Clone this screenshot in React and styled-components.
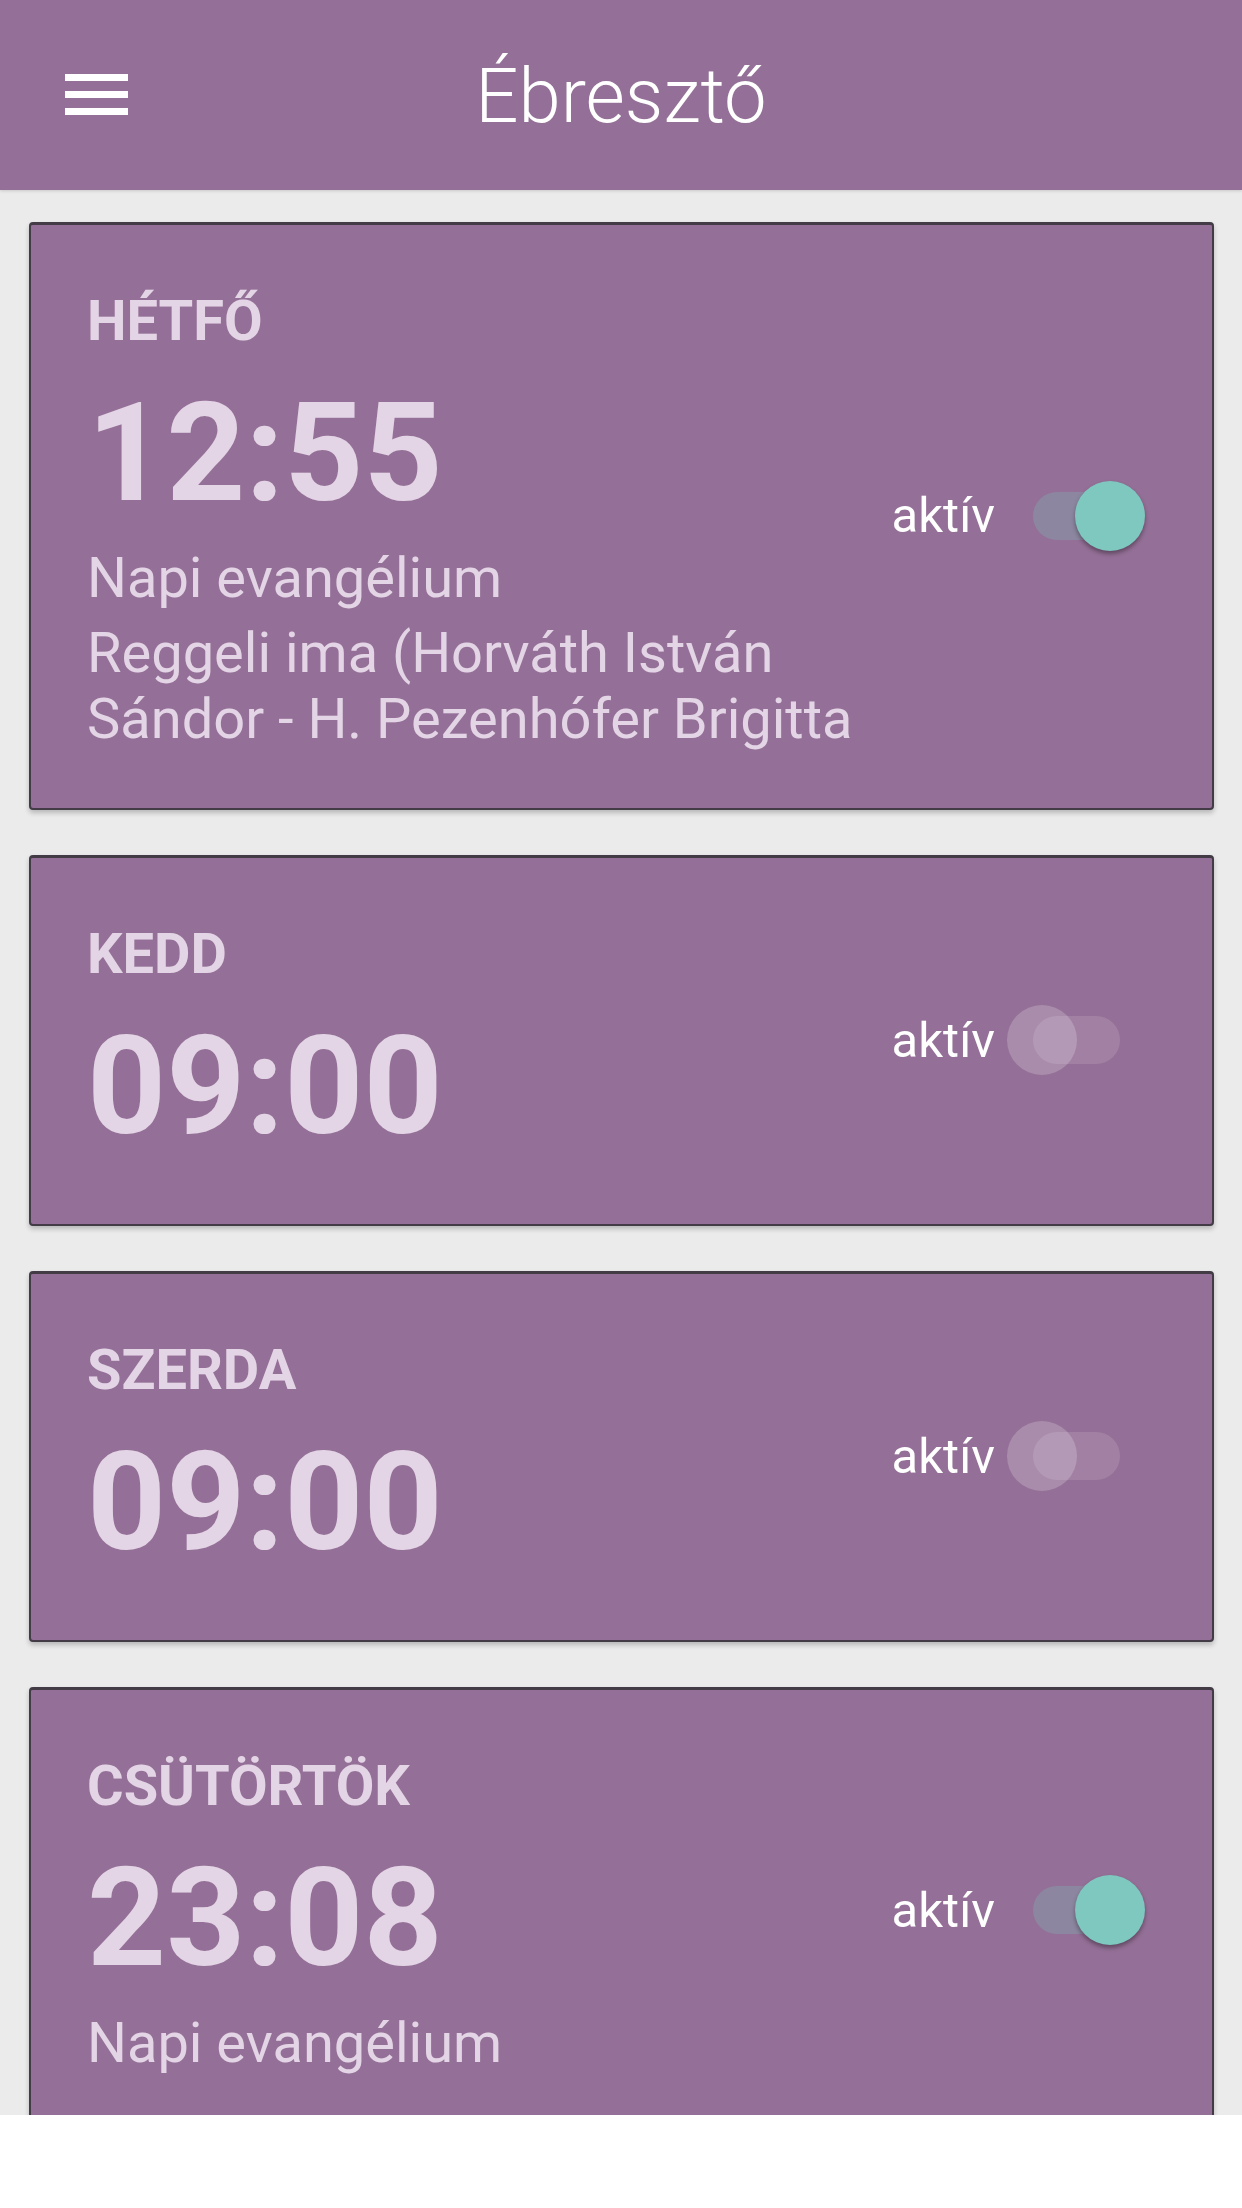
import styled, { createGlobalStyle } from "styled-components";

const GlobalStyle = createGlobalStyle`
  html, body {
    margin: 0;
    padding: 0;
    background: #ffffff;
    font-family: Roboto, "Noto Sans", "Liberation Sans", sans-serif;
  }
`;

const Screen = styled.div`
  height: 2115px;
  overflow: hidden;
  background: #ebebeb;
`;

const TopBar = styled.header`
  height: 190px;
  background: #946f97;
  display: grid;
  grid-template-columns: 1fr auto 1fr;
  align-items: center;
  box-shadow: 0 1px 3px rgba(0, 0, 0, 0.15);
`;

const MenuButton = styled.div`
  display: flex;
  flex-direction: column;
  gap: 10px;
  padding-left: 65px;
  padding-bottom: 2px;
  justify-self: start;

  span {
    display: block;
    width: 63px;
    height: 7px;
    background: #ffffff;
  }
`;

const Title = styled.h1`
  margin: 0;
  padding-top: 2px;
  font-size: 76px;
  font-weight: 300;
  color: #ffffff;
  line-height: 1;
`;

const List = styled.div`
  display: flex;
  flex-direction: column;
  gap: 45px;
  padding: 32px 28px 0 29px;
`;

const Card = styled.div`
  display: flex;
  align-items: center;
  justify-content: space-between;
  background: #946f97;
  border: 2px solid #433b46;
  border-top-width: 3px;
  border-radius: 4px;
  box-shadow: 0 3px 5px rgba(0, 0, 0, 0.22);
  padding: 62px 67px 56px 56px;
`;

const Info = styled.div`
  display: flex;
  flex-direction: column;
  color: #e4d5e6;
`;

const Day = styled.div`
  font-size: 56px;
  font-weight: 700;
  line-height: 68px;
`;

const Time = styled.div`
  margin: 24px 0 8px;
  font-size: 138px;
  font-weight: 700;
  line-height: 148px;
`;

const Program = styled.div`
  margin-top: 10px;
  font-size: 56px;
  line-height: 66px;
`;

const Details = styled.div`
  margin-top: 9px;
  font-size: 56px;
  line-height: 66px;
  max-width: 790px;
`;

const SwitchRow = styled.label`
  display: flex;
  align-items: center;
  gap: 10px;
  margin-bottom: 8px;
  color: #ffffff;
  font-size: 49px;
`;

const Switch = styled.div`
  position: relative;
  width: 140px;
  height: 70px;
`;

const Track = styled.div`
  position: absolute;
  left: 28px;
  top: 11px;
  width: 87px;
  height: 48px;
  border-radius: 24px;
  background: ${(p) => (p.$on ? "#8c86a0" : "rgba(255, 255, 255, 0.12)")};
`;

const Thumb = styled.div`
  position: absolute;
  top: 0;
  left: ${(p) => (p.$on ? "70px" : "2px")};
  width: 70px;
  height: 70px;
  border-radius: 50%;
  background: ${(p) => (p.$on ? "#7ec8bf" : "rgba(255, 255, 255, 0.2)")};
  box-shadow: ${(p) => (p.$on ? "0 3px 4px rgba(0, 0, 0, 0.35)" : "none")};
`;

const alarms = [
  {
    day: "HÉTFŐ",
    time: "12:55",
    on: true,
    program: "Napi evangélium",
    details: "Reggeli ima (Horváth István Sándor - H. Pezenhófer Brigitta",
  },
  { day: "KEDD", time: "09:00", on: false },
  { day: "SZERDA", time: "09:00", on: false },
  {
    day: "CSÜTÖRTÖK",
    time: "23:08",
    on: true,
    program: "Napi evangélium",
  },
];

export default function App() {
  return (
    <>
      <GlobalStyle />
      <Screen>
        <TopBar>
          <MenuButton>
            <span />
            <span />
            <span />
          </MenuButton>
          <Title>Ébresztő</Title>
          <div />
        </TopBar>
        <List>
          {alarms.map((a) => (
            <Card key={a.day}>
              <Info>
                <Day>{a.day}</Day>
                <Time>{a.time}</Time>
                {a.program && <Program>{a.program}</Program>}
                {a.details && <Details>{a.details}</Details>}
              </Info>
              <SwitchRow>
                aktív
                <Switch>
                  <Track $on={a.on} />
                  <Thumb $on={a.on} />
                </Switch>
              </SwitchRow>
            </Card>
          ))}
        </List>
      </Screen>
    </>
  );
}
